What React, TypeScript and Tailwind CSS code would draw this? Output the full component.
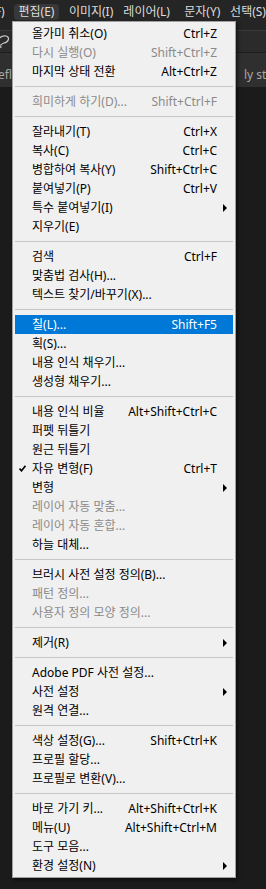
import React from "react";

type Item = {
  label: string;
  shortcut?: string;
  disabled?: boolean;
  sub?: boolean;
  checked?: boolean;
  active?: boolean;
};

const groups: Item[][] = [
  [
    { label: "올가미 취소(O)", shortcut: "Ctrl+Z" },
    { label: "다시 실행(O)", shortcut: "Shift+Ctrl+Z", disabled: true },
    { label: "마지막 상태 전환", shortcut: "Alt+Ctrl+Z" },
  ],
  [{ label: "희미하게 하기(D)...", shortcut: "Shift+Ctrl+F", disabled: true }],
  [
    { label: "잘라내기(T)", shortcut: "Ctrl+X" },
    { label: "복사(C)", shortcut: "Ctrl+C" },
    { label: "병합하여 복사(Y)", shortcut: "Shift+Ctrl+C" },
    { label: "붙여넣기(P)", shortcut: "Ctrl+V" },
    { label: "특수 붙여넣기(I)", sub: true },
    { label: "지우기(E)" },
  ],
  [
    { label: "검색", shortcut: "Ctrl+F" },
    { label: "맞춤법 검사(H)..." },
    { label: "텍스트 찾기/바꾸기(X)..." },
  ],
  [
    { label: "칠(L)...", shortcut: "Shift+F5", active: true },
    { label: "획(S)..." },
    { label: "내용 인식 채우기..." },
    { label: "생성형 채우기..." },
  ],
  [
    { label: "내용 인식 비율", shortcut: "Alt+Shift+Ctrl+C" },
    { label: "퍼펫 뒤틀기" },
    { label: "원근 뒤틀기" },
    { label: "자유 변형(F)", shortcut: "Ctrl+T", checked: true },
    { label: "변형", sub: true },
    { label: "레이어 자동 맞춤...", disabled: true },
    { label: "레이어 자동 혼합...", disabled: true },
    { label: "하늘 대체..." },
  ],
  [
    { label: "브러시 사전 설정 정의(B)..." },
    { label: "패턴 정의...", disabled: true },
    { label: "사용자 정의 모양 정의...", disabled: true },
  ],
  [{ label: "제거(R)", sub: true }],
  [
    { label: "Adobe PDF 사전 설정..." },
    { label: "사전 설정", sub: true },
    { label: "원격 연결..." },
  ],
  [
    { label: "색상 설정(G)...", shortcut: "Shift+Ctrl+K" },
    { label: "프로필 할당..." },
    { label: "프로필로 변환(V)..." },
  ],
  [
    { label: "바로 가기 키...", shortcut: "Alt+Shift+Ctrl+K" },
    { label: "메뉴(U)", shortcut: "Alt+Shift+Ctrl+M" },
    { label: "도구 모음..." },
    { label: "환경 설정(N)", sub: true },
  ],
];

const font = { fontFamily: '"Noto Sans", "Noto Sans CJK KR", sans-serif' };

function Row({ item }: { item: Item }) {
  const color = item.active
    ? "bg-[#0078d7] text-white"
    : item.disabled
    ? "text-[#8a8a8a]"
    : "text-black";
  return (
    <div className={`relative flex h-[19px] items-center pl-[17px] pr-[16px] text-[12px] ${color}`}>
      {item.checked && (
        <svg className="absolute left-[4px] top-[6px]" width="7" height="7" viewBox="0 0 7 7">
          <path d="M0.5 3.5 L2.5 5.8 L6.5 0.8" fill="none" stroke="black" strokeWidth="1.6" />
        </svg>
      )}
      <span className="flex-1 whitespace-nowrap">{item.label}</span>
      {item.shortcut && <span className="whitespace-nowrap">{item.shortcut}</span>}
      {item.sub && (
        <svg className="absolute right-[6px] top-[6px]" width="4" height="8" viewBox="0 0 4 8">
          <path d="M0 0 L4 4 L0 8 Z" fill="black" />
        </svg>
      )}
    </div>
  );
}

export default function App() {
  return (
    <div className="relative h-[889px] w-[266px] overflow-hidden bg-[#1b1b1b]" style={font}>
      {/* menu bar */}
      <div className="flex h-[23px] items-center bg-[#252525] pt-[1px] text-[12px] text-[#dcdcdc]">
        <span className="ml-[-36px] w-[46px] text-center">파일(F)</span>
        <span className="ml-[4px] flex h-[16px] w-[46px] items-center justify-center rounded-sm bg-[#383838]">편집(E)</span>
        <span className="ml-[6px] w-[52px] text-center">이미지(I)</span>
        <span className="ml-[4px] w-[52px] text-center">레이어(L)</span>
        <span className="ml-[6px] w-[48px] text-center">문자(Y)</span>
        <span className="ml-[4px] whitespace-nowrap">선택(S)</span>
      </div>
      {/* options bar */}
      <div className="h-[7px] bg-[#252525]" />
      <div className="h-[1px] bg-[#3a3a3a]" />
      <div className="flex h-[21px] items-center bg-[#2b2b2b]">
        <svg width="12" height="18" viewBox="0 0 12 18" className="ml-[-2px]">
          <path d="M2 12 C-2 8 2 2 8 3 C12 4 11 9 6 10 C3 11 2 12 3 15" fill="none" stroke="#c8c8c8" strokeWidth="1.2" />
        </svg>
      </div>
      <div className="h-[1px] bg-[#1e1e1e]" />
      {/* tab bar */}
      <div className="flex h-[34px] items-center justify-between bg-[#2f2f2f] pt-[10px] text-[12px] text-[#a8a8a8]">
        <span className="ml-[-2px]">efl</span>
        <span className="w-[28px] overflow-hidden whitespace-nowrap pl-[6px]">ly studio</span>
      </div>

      {/* dropdown */}
      <div className="absolute left-[12px] top-[21px] w-[224px] border border-[#a0a0a0] bg-[#f0f0f0] px-[2px] py-[2px] shadow-[2px_2px_3px_rgba(0,0,0,0.5)]">
        {groups.map((g, gi) => (
          <div key={gi}>
            {gi > 0 && <div className="my-[5px] h-[1px] bg-[#c6c6c6]" />}
            {g.map((item, ii) => (
              <Row key={ii} item={item} />
            ))}
          </div>
        ))}
      </div>
    </div>
  );
}
